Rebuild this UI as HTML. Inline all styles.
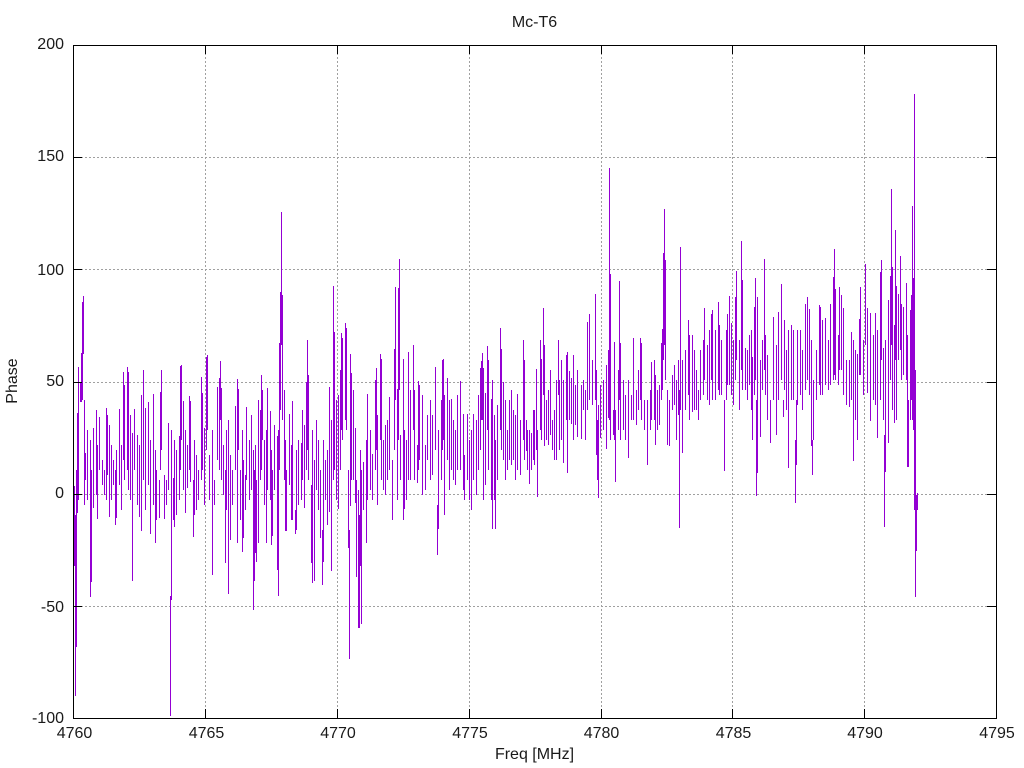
<!DOCTYPE html>
<html><head><meta charset="utf-8"><title>Mc-T6</title>
<style>html,body{margin:0;padding:0;background:#fff}svg{display:block}text{font-family:"Liberation Sans",sans-serif;font-size:16px;fill:#1a1a1a}</style>
</head><body>
<svg width="1024" height="768" viewBox="0 0 1024 768" xmlns="http://www.w3.org/2000/svg">
<rect width="1024" height="768" fill="#fff"/>
<g stroke="#a0a0a0" stroke-width="1" stroke-dasharray="2 2" shape-rendering="crispEdges" fill="none">
<path d="M73 45.5H996M73 157.5H996M73 269.5H996M73 382.5H996M73 494.5H996M73 606.5H996"/>
<path d="M205.5 45V718M337.5 45V718M469.5 45V718M601.5 45V718M732.5 45V718M864.5 45V718"/>
</g>
<path fill="none" stroke="#9400d3" stroke-width="1" shape-rendering="crispEdges" d="
M74.5 486V566M75.5 515V696M76.5 470V647M77.5 413V513M78.5 367V500M80.5 382V402M81.5 353V402M82.5 302V400M83.5 296V354M84.5 400V505M85.5 453V480
M87.5 430V500M90.5 440V597M91.5 470V582M93.5 428V508M96.5 410V495M97.5 445V519M99.5 417V470M102.5 460V485M104.5 470V495M106.5 408V500M107.5 415V475M109.5 425V517M111.5 445V500M113.5 460V485M115.5 470V525M116.5 450V518M119.5 409V485M121.5 445V510M123.5 372V460M124.5 385V480M127.5 367V470M128.5 372V490M130.5 415V500M132.5 433V581M134.5 409V470M137.5 435V505M139.5 445V517M141.5 395V531M143.5 370V480M145.5 408V510M148.5 402V485M150.5 440V534M153.5 394V505M155.5 450V543M156.5 470V520M159.5 480V518M160.5 392V470M161.5 370V450M164.5 475V519M166.5 480V505M168.5 423V490M170.5 596V716M171.5 430V600M173.5 478V520M174.5 440V527M176.5 450V515M179.5 436V500M180.5 366V470M181.5 365V440M183.5 401V490M185.5 430V513M187.5 445V488M189.5 396V470M190.5 401V482M193.5 480V537M194.5 440V515M196.5 455V510M198.5 470V500M201.5 377V480M202.5 393V470M204.5 428V505M206.5 357V450M207.5 355V430M209.5 455V500M212.5 430V575M214.5 480V505M217.5 387V460M219.5 378V470M220.5 361V420M221.5 388V480M223.5 445V495M225.5 470V563M226.5 430V510M228.5 420V594M230.5 455V540M232.5 470V505M235.5 406V470M237.5 379V543M238.5 389V450M240.5 470V520M242.5 430V552M243.5 460V538M245.5 475V510M246.5 407V480M249.5 440V500M251.5 415V490M253.5 450V610M254.5 470V581M255.5 445V553M256.5 480V562M258.5 400V543M260.5 410V480M261.5 375V470M262.5 390V440M264.5 440V505M266.5 430V543M267.5 388V490M270.5 411V500M271.5 450V545M272.5 470V536M274.5 425V490M277.5 436V570M278.5 430V596M279.5 343V470M280.5 292V410M281.5 212V345M282.5 295V420M284.5 390V480M285.5 440V531M286.5 470V531M289.5 414V485M291.5 445V520M292.5 401V520M295.5 510V534M296.5 450V530M298.5 440V505
M301.5 443V500M302.5 410V480M304.5 425V508M306.5 382V470M307.5 340V450M308.5 375V480M311.5 485V563M312.5 430V583M314.5 460V581M316.5 420V490M318.5 440V510M320.5 470V538M322.5 530V585M323.5 440V562M325.5 460V500M327.5 450V525M329.5 387V512M331.5 420V571M333.5 286V480M334.5 332V470M336.5 400V500M338.5 395V509M340.5 370V470M341.5 333V430M342.5 338V440M345.5 323V420M346.5 328V430M348.5 470V548M349.5 530V659M350.5 354V506M351.5 373V480M353.5 390V480M355.5 428V503M356.5 480V577M358.5 490V628M359.5 515V628M360.5 450V566M361.5 470V624M363.5 462V510M366.5 440V543M367.5 394V500M370.5 430V490M372.5 454V500M375.5 380V470M376.5 368V450M377.5 415V505M380.5 354V440M381.5 359V480M383.5 440V490M385.5 425V495M387.5 420V480M389.5 397V470M392.5 460V520M394.5 349V450M395.5 287V400M397.5 389V500M398.5 288V440M399.5 259V390M400.5 435V480M403.5 359V520M404.5 430V509M406.5 440V500M408.5 352V480M410.5 390V480M413.5 345V430M414.5 390V480M417.5 445V483M418.5 381V470M419.5 385V460M422.5 395V495M425.5 445V490M427.5 415V460M430.5 400V480M432.5 415V475M435.5 367V450M437.5 505V555M438.5 430V529M441.5 400V480M442.5 360V450M443.5 359V440M444.5 395V515M447.5 378V460M449.5 400V490M451.5 399V470M453.5 420V480M455.5 430V485M457.5 395V470M460.5 381V470M463.5 414V490M464.5 455V500M467.5 414V480M469.5 440V500M471.5 430V510M473.5 414V480M476.5 420V495M478.5 395V470M480.5 368V450M481.5 361V420M482.5 353V420M483.5 368V500M485.5 393V485M487.5 346V430M488.5 360V470M491.5 399V500M492.5 380V529M494.5 415V500M495.5 440V529M497.5 405V480M500.5 328V430M501.5 349V450M503.5 382V460M505.5 400V480M507.5 430V470M509.5 400V460M511.5 390V465M513.5 410V460M515.5 415V480M517.5 394V470M520.5 420V475M523.5 340V440M524.5 360V460M526.5 420V451M527.5 430V470M529.5 430V484M531.5 433V470M533.5 410V460M534.5 410V465M536.5 369V450M537.5 430V497
M540.5 340V430M541.5 359V440M543.5 308V395M544.5 345V446M546.5 400V440M548.5 390V445M550.5 370V435M552.5 420V450M554.5 410V460M556.5 380V460M558.5 340V395M559.5 380V450M561.5 360V440M563.5 380V463M566.5 355V420M567.5 352V473M569.5 371V420M571.5 378V424M573.5 355V440M575.5 385V425M577.5 370V437M581.5 385V439M583.5 380V410M585.5 390V440M587.5 322V410M589.5 314V400M592.5 360V405M595.5 294V400M596.5 370V455M597.5 420V480M598.5 405V498M600.5 385V438M603.5 380V430M606.5 365V449M608.5 350V418M609.5 168V420M610.5 274V440M613.5 410V435M614.5 342V440M615.5 410V482M618.5 370V430M619.5 281V400M620.5 343V440M623.5 380V430M625.5 395V440M628.5 380V458M631.5 395V420M633.5 338V420M636.5 390V425M638.5 370V410M640.5 338V400M641.5 343V420M644.5 400V430M647.5 400V465M650.5 390V430M651.5 362V420M654.5 360V420M655.5 375V445M657.5 390V430M659.5 385V425M661.5 343V400M662.5 329V390M663.5 253V360M664.5 209V345M665.5 260V380M667.5 390V445M669.5 400V446M672.5 375V410M674.5 365V405M676.5 380V440M678.5 360V415M679.5 390V528M680.5 247V410M682.5 360V453M685.5 350V410M688.5 320V395M689.5 335V420M692.5 335V412M694.5 350V410M696.5 370V410M698.5 390V420M700.5 350V400M703.5 340V395M704.5 308V380M707.5 345V400M709.5 330V405M711.5 314V380M712.5 310V400M715.5 330V400M718.5 302V390M719.5 325V395M721.5 340V395M724.5 400V471M726.5 330V400M727.5 314V385M729.5 296V385M731.5 323V395M733.5 340V405M735.5 297V380M736.5 271V360M739.5 340V410M741.5 241V370M742.5 280V390M745.5 348V390M747.5 350V400M749.5 335V385M751.5 330V410M752.5 357V440M754.5 307V395M755.5 278V380M756.5 400V496M757.5 297V473M760.5 360V437M762.5 340V390M764.5 259V370M765.5 335V395M767.5 355V420M770.5 400V443M773.5 317V400M776.5 345V435M778.5 312V400M781.5 284V380M783.5 400V417M784.5 320V390M786.5 350V410M788.5 330V468M791.5 325V400M793.5 330V400M795.5 440V503M796.5 400V465M797.5 330V405M800.5 330V395M802.5 350V410M805.5 304V390M807.5 297V380M809.5 309V395M811.5 340V446M812.5 440V475M813.5 380V440M816.5 350V400M819.5 305V385M820.5 307V395M822.5 320V395M825.5 318V385M828.5 340V390M830.5 304V385M833.5 277V380M834.5 249V375M835.5 289V380M838.5 335V385M839.5 287V370M841.5 295V370M843.5 308V395M846.5 360V405M849.5 360V407M851.5 332V400M853.5 340V461M855.5 350V420M857.5 354V440M859.5 319V375M860.5 287V375M863.5 340V395M865.5 264V345M867.5 308V393M870.5 313V421M873.5 335V400M875.5 313V405M877.5 330V438M880.5 272V400M881.5 260V360M883.5 348V420M884.5 435V527M885.5 340V472M888.5 300V443M890.5 276V380M891.5 189V345M892.5 267V410M894.5 325V423M895.5 230V360M896.5 286V420M898.5 294V360M900.5 256V350M901.5 304V380M903.5 307V375M906.5 283V380M907.5 335V467M908.5 400V467M910.5 310V420M911.5 295V400M912.5 206V420M913.5 278V430M914.5 94V510M915.5 370V597M916.5 495V551M917.5 493V510"/>
<rect x="73.5" y="45.5" width="923" height="673" fill="none" stroke="#000" stroke-width="1" shape-rendering="crispEdges"/>
<path stroke="#000" stroke-width="1" fill="none" shape-rendering="crispEdges" d="M73 157.5h9M996 157.5h-9M73 269.5h9M996 269.5h-9M73 382.5h9M996 382.5h-9M73 494.5h9M996 494.5h-9M73 606.5h9M996 606.5h-9M205.5 718v-9M205.5 45v9M337.5 718v-9M337.5 45v9M469.5 718v-9M469.5 45v9M601.5 718v-9M601.5 45v9M732.5 718v-9M732.5 45v9M864.5 718v-9M864.5 45v9"/>
<g text-anchor="end">
<text x="64" y="49">200</text><text x="64" y="161">150</text><text x="64" y="275">100</text><text x="64" y="386">50</text><text x="64" y="498">0</text><text x="64" y="612">-50</text><text x="64" y="723">-100</text>
</g>
<g text-anchor="middle">
<text x="74.5" y="738">4760</text><text x="206.5" y="738">4765</text><text x="338" y="738">4770</text><text x="470" y="738">4775</text><text x="601.5" y="738">4780</text><text x="733.5" y="738">4785</text><text x="865" y="738">4790</text><text x="997" y="738">4795</text>
<text x="534.5" y="27">Mc-T6</text>
<text x="534.5" y="759">Freq [MHz]</text>
<text transform="translate(17 381) rotate(-90)">Phase</text>
</g>
</svg>
</body></html>
